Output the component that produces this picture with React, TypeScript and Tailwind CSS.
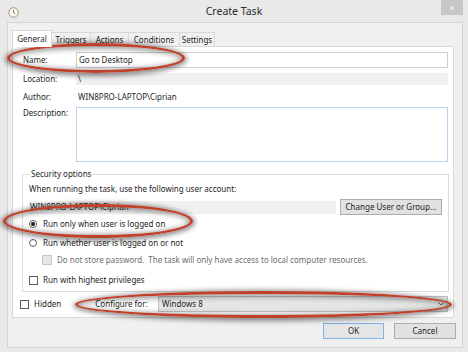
import { ReactNode } from "react";

const font = { fontFamily: '"Noto Sans", "Open Sans", sans-serif' };

type TabProps = {
  label: string;
  width: string;
  active?: boolean;
};

const Tab = ({ label, width, active }: TabProps) => (
  <div
    className={
      (active
        ? "h-[17px] -mb-px flex items-center justify-center bg-white border border-b-0 border-[#d9d9d9] text-[8px] relative z-10 "
        : "h-[14px] mt-[3px] flex items-center justify-center bg-[#f0f0f0] border border-b-0 border-l-0 border-[#d9d9d9] text-[8px] ") + width
    }
  >
    {label}
  </div>
);

const Row = ({ label, children, className }: { label: string; children: ReactNode; className?: string }) => (
  <div className={"flex " + (className ?? "")}>
    <div className="w-[63px] shrink-0 pl-[10px] text-[8px]">{label}</div>
    <div className="flex-1">{children}</div>
  </div>
);

const CheckBox = ({ disabled }: { disabled?: boolean }) => (
  <span
    className={
      disabled
        ? "w-[10px] h-[10px] shrink-0 border border-[#c6c6c6] bg-[#e6e6e6]"
        : "w-[9px] h-[9px] shrink-0 border border-[#5e5e5e] bg-white"
    }
  />
);

const Radio = ({ checked }: { checked?: boolean }) => (
  <span className="w-[8px] h-[8px] shrink-0 rounded-full border border-[#5e5e5e] bg-white flex items-center justify-center">
    {checked && <span className="w-[4px] h-[4px] rounded-full bg-[#1a1a1a]" />}
  </span>
);

const Ellipse = ({ className }: { className: string }) => (
  <div
    className={
      "absolute rounded-[50%] border-[3px] border-[#c0412b] shadow-[0_1px_5px_2px_rgba(0,0,0,0.45),inset_0_1px_5px_2px_rgba(0,0,0,0.35)] " +
      className
    }
  />
);

const ClockIcon = () => (
  <svg width="11" height="11" viewBox="0 0 11 11">
    <circle cx="5.5" cy="5.5" r="4.8" fill="#f3ecd0" stroke="#9a9384" strokeWidth="0.9" />
    <circle cx="5.5" cy="5.5" r="3.6" fill="#fbf8ec" />
    <path d="M5.5 3 V5.6 L7.2 6.6" stroke="#555" strokeWidth="0.8" fill="none" />
  </svg>
);

const App = () => {
  return (
    <div className="w-[468px] h-[352px] bg-[#e9e9e9] relative flex flex-col text-[#1e1e1e] overflow-hidden" style={font}>
      {/* title bar */}
      <div className="h-[22px] shrink-0 flex items-start relative">
        <div className="pl-[8px] pt-[7px]">
          <ClockIcon />
        </div>
        <div className="absolute left-0 right-0 top-[4px] text-center text-[10.5px] text-[#2b2b2b]">Create Task</div>
        <div className="ml-auto mr-[5px] w-[22px] h-[15px] bg-[#c7c7c7] flex items-center justify-center text-white text-[9px] leading-none relative">
          ×
        </div>
      </div>

      {/* client area */}
      <div className="flex-1 ml-[7px] mr-[5px] mb-[4px] bg-[#f0f0f0] border border-[#d4d4d4] flex flex-col pl-[4px] pt-[6px]">
        <div className="flex items-end h-[17px]">
          <Tab label="General" width="w-[40px]" active />
          <Tab label="Triggers" width="w-[39px]" />
          <Tab label="Actions" width="w-[38px]" />
          <Tab label="Conditions" width="w-[51px]" />
          <Tab label="Settings" width="w-[35px]" />
        </div>

        <div className="w-[442px] h-[272px] bg-white border border-[#d9d9d9] flex flex-col pt-[5px] pr-[5px]">
          <Row label="Name:" className="items-center h-[16px]">
            <div className="h-[16px] border border-[#cfcfcf] flex items-center pl-[2px] text-[8px]">Go to Desktop</div>
          </Row>
          <Row label="Location:" className="items-center mt-[5px] h-[12px]">
            <div className="h-[12px] bg-[#f0f0f0] flex items-center pl-[2px] text-[8px]">\</div>
          </Row>
          <Row label="Author:" className="items-center mt-[6px] h-[12px]">
            <div className="pl-[2px] text-[8px]">WIN8PRO-LAPTOP\Ciprian</div>
          </Row>
          <Row label="Description:" className="mt-[4px]">
            <div className="h-[55px] border border-[#b9d1ea]" />
          </Row>

          <fieldset className="mt-[6px] ml-[9px] mr-[2px] border border-[#dcdcdc] h-[124px] px-[6px] pt-[3px]">
            <legend className="text-[8px] px-[1px] ml-[1px]">Security options</legend>
            <div className="text-[8px] h-[12px] flex items-center">When running the task, use the following user account:</div>
            <div className="flex items-center gap-[4px] mt-[4px]">
              <div className="w-[307px] h-[13px] bg-[#f0f0f0] text-[8px] flex items-center pl-[1px]">WIN8PRO-LAPTOP\Ciprian</div>
              <div className="w-[102px] h-[16px] bg-[#e1e1e1] border border-[#adadad] text-[8px] flex items-center justify-center">
                Change User or Group...
              </div>
            </div>
            <div className="flex items-center gap-[6px] mt-[3px] h-[12px]">
              <Radio checked />
              <span className="text-[8px]">Run only when user is logged on</span>
            </div>
            <div className="flex items-center gap-[6px] mt-[7px] h-[12px]">
              <Radio />
              <span className="text-[8px]">Run whether user is logged on or not</span>
            </div>
            <div className="flex items-center gap-[5px] mt-[5px] h-[12px] pl-[13px]">
              <CheckBox disabled />
              <span className="text-[8px] text-[#6d6d6d]">
                Do not store password.&nbsp; The task will only have access to local computer resources.
              </span>
            </div>
            <div className="flex items-center gap-[5px] mt-[8px] h-[12px]">
              <CheckBox />
              <span className="text-[8px]">Run with highest privileges</span>
            </div>
          </fieldset>

          <div className="flex items-center mt-[4px] h-[16px] pl-[7px]">
            <CheckBox />
            <span className="text-[8px] ml-[5px]">Hidden</span>
            <span className="text-[8px] ml-[34px]">Configure for:</span>
            <div className="ml-auto w-[290px] h-[16px] bg-[#e5e5e5] border border-[#c4c4c4] flex items-center pl-[3px] text-[8px]">
              Windows 8
              <svg className="ml-auto mr-[3px]" width="6" height="4" viewBox="0 0 6 4">
                <path d="M0.5 0.5 L3 3 L5.5 0.5" stroke="#6a6a6a" strokeWidth="1" fill="none" />
              </svg>
            </div>
          </div>
        </div>

        <div className="flex justify-end gap-[10px] mt-[5px] pr-[6px]">
          <div className="w-[61px] h-[16px] bg-[#e5e5e5] border border-[#7eb4ea] text-[8px] flex items-center justify-center">OK</div>
          <div className="w-[62px] h-[16px] bg-[#e1e1e1] border border-[#adadad] text-[8px] flex items-center justify-center">Cancel</div>
        </div>
      </div>

      {/* annotation ellipses */}
      <Ellipse className="left-[7px] top-[43px] w-[178px] h-[30px]" />
      <Ellipse className="left-[3px] top-[204px] w-[190px] h-[34px]" />
      <Ellipse className="left-[75px] top-[291px] w-[377px] h-[27px]" />
    </div>
  );
};

export default App;
